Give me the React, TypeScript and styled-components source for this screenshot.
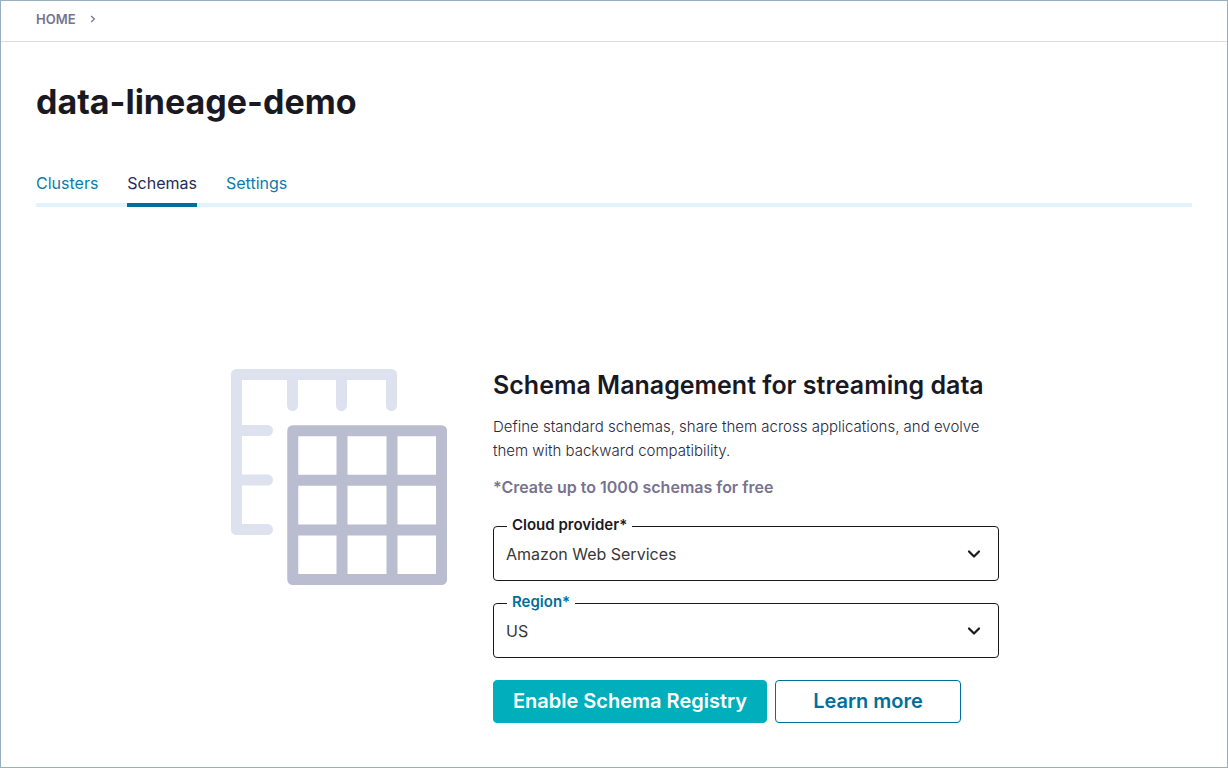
import React, { useId } from "react";
import styled, { createGlobalStyle, css } from "styled-components";

const GlobalStyle = createGlobalStyle`
  *, *::before, *::after { box-sizing: border-box; }
  body {
    margin: 0;
    background: #fff;
    color: #191924;
    font-family: Inter, "Liberation Sans", sans-serif;
    -webkit-font-smoothing: antialiased;
  }
  h1, h2, p { margin: 0; }
  button, select { font-family: inherit; }
`;

const Page = styled.div`
  min-height: 100vh;
  border: 1px solid #98afbd;
`;

const Breadcrumb = styled.nav`
  display: flex;
  align-items: center;
  gap: 14px;
  height: 41px;
  padding: 0 35px 4px;
  border-bottom: 1px solid #dadcde;
  color: #77738f;
`;

const Crumb = styled.a`
  color: inherit;
  font-size: 13px;
  font-weight: 600;
  line-height: 20px;
  text-decoration: none;
`;

const Main = styled.main`
  padding: 38px 35px 44px;
`;

const Title = styled.h1`
  font-size: 34px;
  font-weight: 700;
  line-height: 44px;
`;

const Tabs = styled.nav`
  display: flex;
  gap: 29px;
  margin-top: 47px;
  box-shadow: inset 0 -4px #e3f3fb;
`;

const Tab = styled.a<{ $active?: boolean }>`
  padding-bottom: 8px;
  border-bottom: 4px solid ${(p) => (p.$active ? "#006f9b" : "transparent")};
  color: ${(p) => (p.$active ? "#1f2d57" : "#0b7cae")};
  font-size: 16px;
  font-weight: 400;
  line-height: 24px;
  text-decoration: none;
`;

const Hero = styled.section`
  display: flex;
  justify-content: center;
  align-items: flex-start;
  gap: 46px;
  margin-top: 162px;
`;

const Art = styled.svg`
  flex: none;
`;

const Content = styled.form`
  flex: 0 1 506px;
  min-width: 0;
`;

const Heading = styled.h2`
  font-size: 25px;
  font-weight: 600;
  line-height: 32px;
`;

const Description = styled.p`
  margin-top: 14px;
  color: #29293d;
  font-size: 15px;
  font-weight: 300;
  line-height: 24px;
`;

const Note = styled.p`
  margin-top: 12px;
  color: #77738f;
  font-size: 16px;
  font-weight: 600;
  line-height: 24px;
`;

const Fields = styled.div`
  display: grid;
  gap: 11px;
  margin-top: 16px;
`;

const FieldBox = styled.fieldset`
  position: relative;
  min-width: 0;
  margin: 0;
  padding: 0;
  border: 1px solid #1a1a1a;
  border-radius: 4px;
`;

const Legend = styled.legend<{ $accent?: boolean }>`
  margin-left: 13px;
  padding: 0 5px 2px;
  color: ${(p) => (p.$accent ? "#006f9b" : "#191924")};
  font-size: 15px;
  font-weight: 600;
  line-height: 20px;
`;

const Select = styled.select`
  display: block;
  width: 100%;
  height: 43px;
  padding: 0 40px 10px 12px;
  border: 0;
  appearance: none;
  background: transparent;
  color: #383838;
  font-size: 16px;
  font-weight: 400;
  line-height: 24px;
`;

const Chevron = styled.svg`
  position: absolute;
  right: 17px;
  bottom: 19px;
  pointer-events: none;
`;

const Actions = styled.div`
  display: flex;
  flex-wrap: wrap;
  gap: 8px;
  margin-top: 22px;
`;

const Button = styled.button<{ $primary?: boolean }>`
  height: 43px;
  padding: 0 8px 2px;
  border-radius: 4px;
  font-size: 20px;
  font-weight: 600;
  line-height: 24px;
  cursor: pointer;
  ${(p) =>
    p.$primary
      ? css`
          width: 274px;
          border: 1px solid #00afbb;
          background: #00afbb;
          color: #fff;
        `
      : css`
          width: 186px;
          border: 1px solid #006f9b;
          background: #fff;
          color: #006f9b;
        `}
`;

type FieldProps = { label: string; options: string[]; accent?: boolean };

function SelectField({ label, options, accent }: FieldProps) {
  const id = useId();
  return (
    <FieldBox>
      <Legend $accent={accent}>
        <label htmlFor={id}>{label}</label>
      </Legend>
      <Select id={id}>
        {options.map((o) => (
          <option key={o}>{o}</option>
        ))}
      </Select>
      <Chevron width="14" height="14" viewBox="0 0 14 14" fill="none" aria-hidden="true">
        <path d="M2 4.5 7 9.5 12 4.5" stroke="#1a1a1a" strokeWidth="2.2" strokeLinecap="round" strokeLinejoin="round" />
      </Chevron>
    </FieldBox>
  );
}

function GridArt() {
  return (
    <Art width="218" height="216" viewBox="-2 0 218 216" fill="none" aria-hidden="true">
      <g stroke="#dee2ef" strokeWidth="11" strokeLinecap="round">
        <path d="M61.5 5.5V36.5M110.5 5.5V36.5M5.5 61.5H36.5M5.5 111H36.5" />
        <path d="M160.5 36.5V5.5H5.5V160.5H36.5" strokeLinejoin="round" />
      </g>
      <g stroke="#babdcf">
        <rect x="61.75" y="61.75" width="148.8" height="148.8" strokeWidth="11" strokeLinejoin="round" />
        <path d="M111 62V210M161 62V210M62 111.2H210M62 161H210" strokeWidth="11" />
      </g>
    </Art>
  );
}

export default function App() {
  return (
    <>
      <GlobalStyle />
      <Page>
        <Breadcrumb aria-label="Breadcrumb">
          <Crumb href="#home">HOME</Crumb>
          <svg width="6" height="8" viewBox="0 0 6 8" fill="none" aria-hidden="true">
            <path d="M1.2 1 4.4 4 1.2 7" stroke="currentColor" strokeWidth="1.2" />
          </svg>
        </Breadcrumb>
        <Main>
          <Title>data-lineage-demo</Title>
          <Tabs aria-label="Environment">
            <Tab href="#clusters">Clusters</Tab>
            <Tab href="#schemas" $active aria-current="page">Schemas</Tab>
            <Tab href="#settings">Settings</Tab>
          </Tabs>
          <Hero>
            <GridArt />
            <Content onSubmit={(e) => e.preventDefault()}>
              <Heading>Schema Management for streaming data</Heading>
              <Description>
                Define standard schemas, share them across applications, and evolve them with backward
                compatibility.
              </Description>
              <Note>*Create up to 1000 schemas for free</Note>
              <Fields>
                <SelectField label="Cloud provider*" options={["Amazon Web Services"]} />
                <SelectField label="Region*" options={["US"]} accent />
              </Fields>
              <Actions>
                <Button type="submit" $primary>Enable Schema Registry</Button>
                <Button type="button">Learn more</Button>
              </Actions>
            </Content>
          </Hero>
        </Main>
      </Page>
    </>
  );
}
